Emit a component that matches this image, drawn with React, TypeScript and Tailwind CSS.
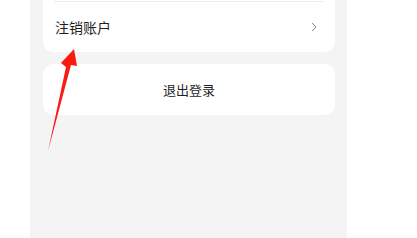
export default function App() {
  return (
    <div
      className="relative w-[417px] h-[238px] bg-white overflow-hidden"
      style={{ fontFamily: '"Noto Sans CJK SC", "Noto Sans", sans-serif' }}
    >
      <div className="ml-[30px] w-[317px] h-full bg-[#f4f4f4] pl-[13px] pr-[12px] flex flex-col">
        <div className="-mt-[18px] bg-white rounded-[10px]">
          <div className="h-[20px] mx-[11px] border-b border-[#ececec]" />
          <div className="h-[50px] flex items-center justify-between pl-[12px] pr-[18px]">
            <span className="text-[14px] text-[#1f1f1f]">注销账户</span>
            <svg width="6" height="10" viewBox="0 0 6 10" fill="none">
              <path d="M1 1l4 4-4 4" stroke="#8a8a8a" strokeWidth="1" />
            </svg>
          </div>
        </div>
        <div className="mt-[12px] h-[51px] bg-white rounded-[10px] flex items-center justify-center">
          <span className="text-[13px] text-[#1f1f1f]">退出登录</span>
        </div>
      </div>
      <svg className="absolute left-0 top-0" width="417" height="238" viewBox="0 0 417 238">
        <polygon points="48,151 66,67 61,63 74,49 77,66 71,65" fill="#fb1a12" />
      </svg>
    </div>
  );
}
